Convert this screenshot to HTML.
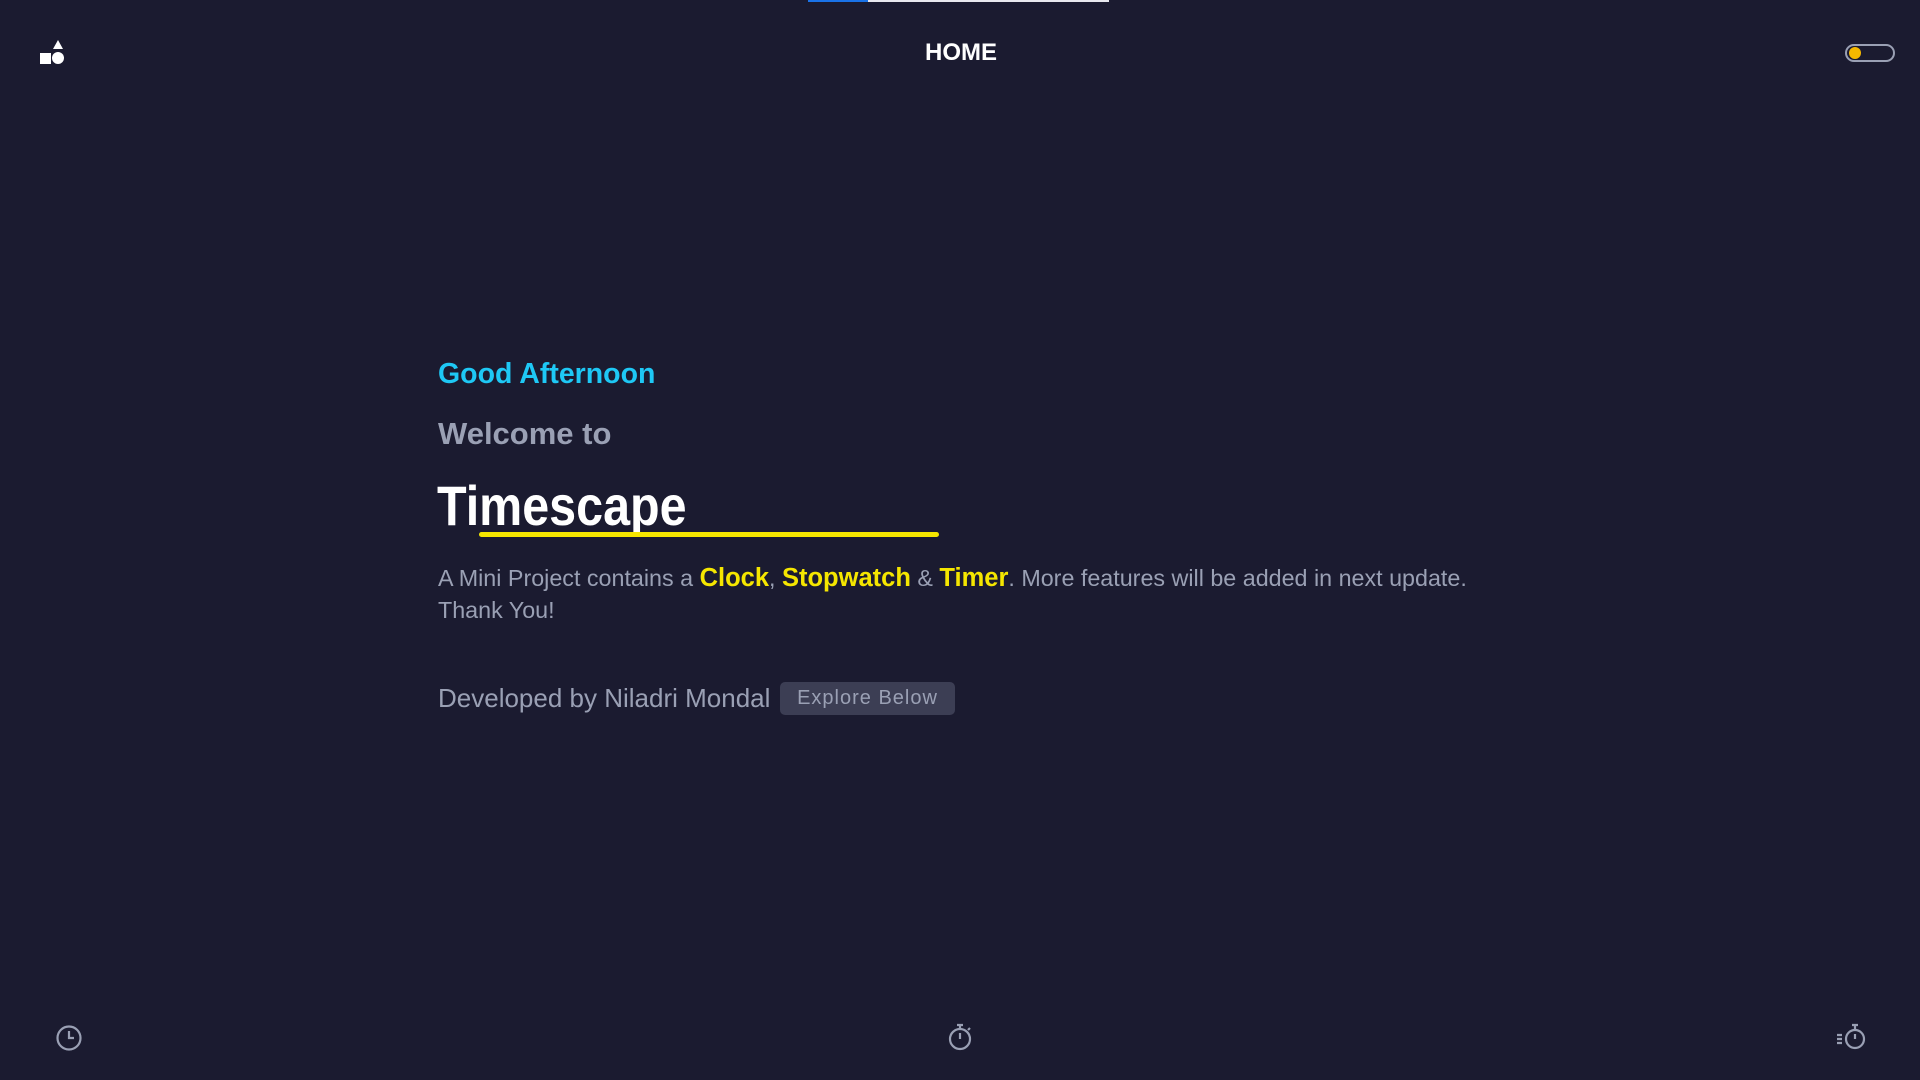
<!DOCTYPE html>
<html><head><meta charset="utf-8"><style>
html,body{margin:0;width:1920px;height:1080px;overflow:hidden;background:#1b1b30;font-family:"Liberation Sans",sans-serif;}
.abs{position:absolute}
</style></head><body>
<div class="abs" style="left:808px;top:0;width:301px;height:2px;background:#e8e8ee"></div>
<div class="abs" style="left:808px;top:0;width:60px;height:2px;background:#1a73e8"></div>
<svg class="abs" style="left:39px;top:39px" width="28" height="28" viewBox="0 0 28 28"><polygon points="19,1 24,10 14,10" fill="#fff"/><rect x="1" y="14" width="11" height="11" fill="#fff"/><circle cx="19" cy="19" r="6" fill="#fff"/></svg>
<div class="abs" style="left:861px;top:39px;width:200px;text-align:center;color:#fff;font-weight:bold;font-size:24px">HOME</div>
<div class="abs" style="left:1845px;top:44px;width:46px;height:14px;border:2px solid #9aa0b4;border-radius:10px"></div>
<div class="abs" style="left:1849px;top:47px;width:12px;height:12px;border-radius:50%;background:#f5b800"></div>
<div class="abs" style="left:438px;top:358px;color:#1ec8f5;font-size:28.5px;font-weight:bold">Good Afternoon</div>
<div class="abs" style="left:438px;top:416px;color:#9aa0b4;font-size:31px;font-weight:bold">Welcome to</div>
<div class="abs" style="left:437px;top:473px;color:#fff;font-size:56px;font-weight:bold;transform:scaleX(0.865);transform-origin:0 0">Timescape</div>
<div class="abs" style="left:479px;top:532px;width:460px;height:5px;border-radius:3px;background:#f5e600"></div>
<div class="abs" style="left:438px;top:562px;width:1250px;color:#9aa0b4;font-size:23.3px;line-height:32px">A Mini Project contains a <b style="color:#f5e600;font-size:25.5px">Clock</b>, <b style="color:#f5e600;font-size:25.5px">Stopwatch</b> &amp; <b style="color:#f5e600;font-size:25.5px">Timer</b>. More features will be added in next update.<br>Thank You!</div>
<div class="abs" style="left:438px;top:683px;color:#9aa0b4;font-size:26px">Developed by Niladri Mondal</div>
<div class="abs" style="left:780px;top:682px;width:175px;height:33px;border-radius:5px;background:#3c3e54;color:#9aa0b4;font-size:20px;line-height:33px;text-align:center;letter-spacing:1px">Explore Below</div>
<svg class="abs" style="left:55px;top:1024px" width="28" height="28" viewBox="0 0 28 28" fill="none" stroke="#9aa0b4" stroke-width="2.2"><circle cx="14" cy="14" r="11.5"/><path d="M14 7v7h5"/></svg>
<svg class="abs" style="left:946px;top:1022px" width="28" height="30" viewBox="0 0 28 30" fill="none" stroke="#9aa0b4" stroke-width="2.2"><circle cx="14" cy="17" r="10"/><path d="M11 3h6M14 3v4M14 11v6M22 8l2-2"/></svg>
<svg class="abs" style="left:1836px;top:1022px" width="32" height="30" viewBox="0 0 32 30" fill="none" stroke="#9aa0b4" stroke-width="2.2"><circle cx="19" cy="17" r="9"/><path d="M16 3h6M19 3v5M19 12v5M1 13h5M1 17h5M1 21h5"/></svg>
</body></html>
